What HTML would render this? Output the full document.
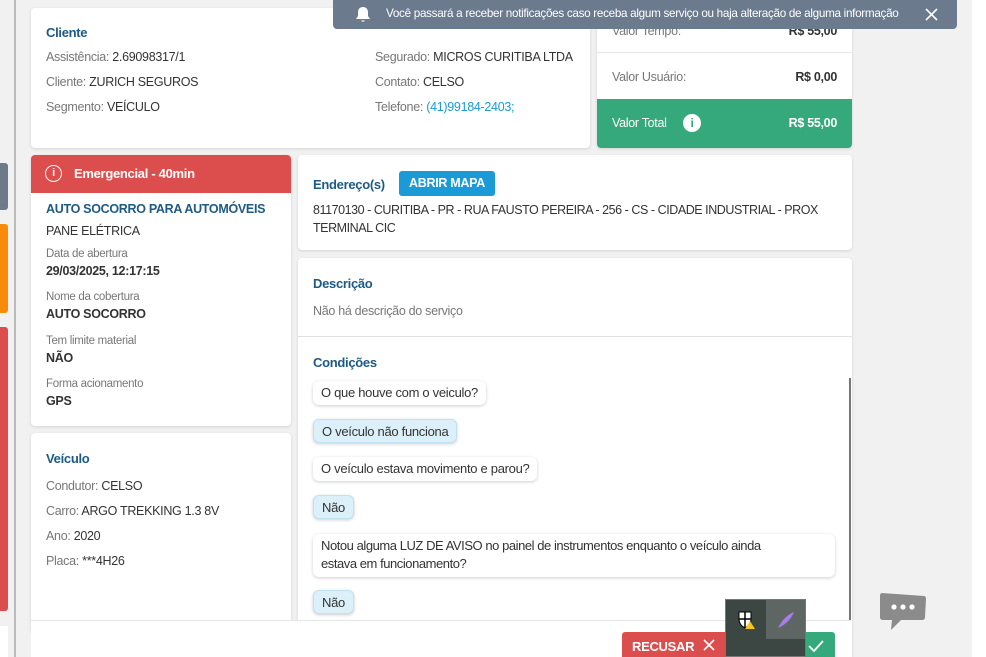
<!DOCTYPE html>
<html><head><meta charset="utf-8"><style>
*{box-sizing:border-box;margin:0;padding:0}
html,body{width:986px;height:657px;overflow:hidden}
body{background:#f1f1f1;font-family:"Liberation Sans",sans-serif;font-size:12.5px;color:#333;position:relative;letter-spacing:-0.3px}
.a{position:absolute}
.card{position:absolute;background:#fff;border-radius:4px;box-shadow:0 1px 3px rgba(0,0,0,.12)}
.h{color:#1d5a85;font-weight:bold;font-size:13px}
.g{color:#777}
.lbl{color:#777;font-size:11.5px}
.v{font-weight:bold;color:#333}
.bub{position:absolute;left:313px;background:#fff;border-radius:6px;box-shadow:0 1px 3px rgba(0,0,0,.2);padding:0 8px;height:24px;line-height:24px;font-size:13px}
.ans{background:#dcf0fa;border:1px solid #bfe2f3}
</style></head><body>
<div class="a" style="left:14px;top:0;width:2px;height:657px;background:#bbb"></div>
<div class="a" style="left:0;top:163px;width:8px;height:47px;background:#6d7a8a;border-radius:0 3px 3px 0"></div>
<div class="a" style="left:0;top:224px;width:8px;height:89px;background:#f88c0a;border-radius:0 3px 3px 0"></div>
<div class="a" style="left:0;top:327px;width:8px;height:284px;background:#dc4e4e;border-radius:0 3px 3px 0"></div>
<div class="a" style="left:0;top:626px;width:8px;height:31px;background:#fff"></div>
<div class="a" style="left:972px;top:0;width:14px;height:657px;background:#fff"></div>

<div class="card" style="left:31px;top:8px;width:559px;height:140px">
<div class="a h" style="left:15px;top:17px">Cliente</div>
<div class="a" style="left:15px;top:42px"><span class="g">Assistência:</span> 2.69098317/1</div>
<div class="a" style="left:15px;top:67px"><span class="g">Cliente:</span> ZURICH SEGUROS</div>
<div class="a" style="left:15px;top:92px"><span class="g">Segmento:</span> VEÍCULO</div>
<div class="a" style="left:344px;top:42px"><span class="g">Segurado:</span> MICROS CURITIBA LTDA</div>
<div class="a" style="left:344px;top:67px"><span class="g">Contato:</span> CELSO</div>
<div class="a" style="left:344px;top:92px"><span class="g">Telefone:</span> <span style="color:#1a9ad6">(41)99184-2403;</span></div>
</div>

<div class="card" style="left:597px;top:0;width:255px;height:148px;border-radius:0 0 4px 4px;overflow:hidden">
<div class="a g" style="left:15px;top:24px">Valor Tempo:</div><div class="a v" style="right:15px;top:24px">R$ 55,00</div>
<div class="a" style="left:0;top:52px;width:255px;height:1px;background:#e6e6e6"></div>
<div class="a g" style="left:15px;top:70px">Valor Usuário:</div><div class="a v" style="right:15px;top:70px">R$ 0,00</div>
<div class="a" style="left:0;top:99px;width:255px;height:49px;background:#35a97c;color:#fff">
<span class="a" style="left:15px;top:17px">Valor Total</span>
<span class="a" style="left:86px;top:15px;width:18px;height:18px;border-radius:50%;background:#fff;color:#35a97c;font-weight:bold;font-size:12px;text-align:center;line-height:18px">i</span>
<span class="a" style="right:15px;top:17px;font-weight:bold">R$ 55,00</span></div>
</div>

<div class="a" style="left:333px;top:0;width:624px;height:29px;background:#6c7a8d;border-radius:0 0 4px 4px;color:#fff;font-size:11.7px">
<svg class="a" style="left:22px;top:6px" width="16" height="17" viewBox="0 0 16 17"><path d="M8 1 C4.5 1 3 3.5 3 6.5 L3 10 L1 13 L15 13 L13 10 L13 6.5 C13 3.5 11.5 1 8 1Z" fill="#fff"/><path d="M6 14.5 Q8 17 10 14.5Z" fill="#fff"/></svg>
<span class="a" style="left:53px;top:7px">Você passará a receber notificações caso receba algum serviço ou haja alteração de alguma informação</span>
<svg class="a" style="left:592px;top:8px" width="13" height="13"><path d="M1 1 L12 12 M12 1 L1 12" stroke="#fff" stroke-width="1.6"/></svg></div>

<div class="card" style="left:31px;top:155px;width:260px;height:271px;overflow:hidden">
<div class="a" style="left:0;top:0;width:260px;height:38px;background:#dc4e4e;color:#fff;font-weight:bold;font-size:13px">
<span class="a" style="left:14px;top:10px;width:17px;height:17px;border:1.5px solid #fff;border-radius:50%;text-align:center;line-height:14px;font-size:11px">i</span>
<span class="a" style="left:43px;top:11px">Emergencial - 40min</span></div>
<div class="a h" style="left:15px;top:47px;font-size:12.5px">AUTO SOCORRO PARA AUTOMÓVEIS</div>
<div class="a" style="left:15px;top:69px">PANE ELÉTRICA</div>
<div class="a lbl" style="left:15px;top:93px">Data de abertura</div>
<div class="a v" style="left:15px;top:109px">29/03/2025, 12:17:15</div>
<div class="a lbl" style="left:15px;top:136px">Nome da cobertura</div>
<div class="a v" style="left:15px;top:152px">AUTO SOCORRO</div>
<div class="a lbl" style="left:15px;top:180px">Tem limite material</div>
<div class="a v" style="left:15px;top:196px">NÃO</div>
<div class="a lbl" style="left:15px;top:223px">Forma acionamento</div>
<div class="a v" style="left:15px;top:239px">GPS</div>
</div>

<div class="card" style="left:31px;top:433px;width:260px;height:200px">
<div class="a h" style="left:15px;top:18px">Veículo</div>
<div class="a" style="left:15px;top:46px"><span class="g">Condutor:</span> CELSO</div>
<div class="a" style="left:15px;top:71px"><span class="g">Carro:</span> ARGO TREKKING 1.3 8V</div>
<div class="a" style="left:15px;top:96px"><span class="g">Ano:</span> 2020</div>
<div class="a" style="left:15px;top:121px"><span class="g">Placa:</span> ***4H26</div>
</div>

<div class="card" style="left:298px;top:155px;width:554px;height:95px">
<div class="a h" style="left:15px;top:22px">Endereço(s)</div>
<div class="a" style="left:101px;top:16px;width:96px;height:25px;background:#1a9ad6;border-radius:3px;color:#fff;font-weight:bold;font-size:12.5px;text-align:center;line-height:25px">ABRIR MAPA</div>
<div class="a" style="left:15px;top:46px;width:530px;line-height:18px;letter-spacing:-0.45px">81170130 - CURITIBA - PR - RUA FAUSTO PEREIRA - 256 - CS - CIDADE INDUSTRIAL - PROX TERMINAL CIC</div>
</div>

<div class="card" style="left:298px;top:258px;width:554px;height:399px;border-radius:4px 4px 0 0">
<div class="a h" style="left:15px;top:18px">Descrição</div>
<div class="a g" style="left:15px;top:46px">Não há descrição do serviço</div>
<div class="a" style="left:0;top:78px;width:554px;height:1px;background:#e0e0e0"></div>
<div class="a h" style="left:15px;top:97px">Condições</div>
</div>
<div class="a" style="left:849px;top:378px;width:2px;height:242px;background:#777"></div>
<div class="bub" style="top:381px">O que houve com o veiculo?</div>
<div class="bub ans" style="top:419px">O veículo não funciona</div>
<div class="bub" style="top:457px">O veículo estava movimento e parou?</div>
<div class="bub ans" style="top:495px">Não</div>
<div class="bub" style="top:534px;width:522px;height:43px;line-height:18px;padding-top:3px;padding-right:40px;letter-spacing:-0.45px">Notou alguma LUZ DE AVISO no painel de instrumentos enquanto o veículo ainda estava em funcionamento?</div>
<div class="bub ans" style="top:590px">Não</div>

<div class="a" style="left:31px;top:620px;width:820px;height:37px;background:#fff;border-top:1px solid #e6e6e6"></div>
<div class="a" style="left:622px;top:632px;width:106px;height:25px;background:#dc4e4e;border-radius:3px 0 0 0;color:#fff;font-weight:bold;font-size:13px;line-height:30px;padding-left:10px">RECUSAR <svg width="12" height="12" style="margin-left:5px"><path d="M1 1 L11 11 M11 1 L1 11" stroke="#fff" stroke-width="1.6"/></svg></div>
<div class="a" style="left:800px;top:632px;width:35px;height:25px;background:#35a97c;border-radius:0 3px 0 0"><svg class="a" style="left:8px;top:8px" width="16" height="12"><path d="M1 6 L6 11 L15 1" stroke="#fff" stroke-width="1.8" fill="none"/></svg></div>
<div class="a" style="left:725px;top:599px;width:81px;height:58px;background:#3c4743;border:1px solid #777">
<div class="a" style="left:40px;top:0;width:39px;height:39px;background:#5e6663"></div>
<svg class="a" style="left:11px;top:10px" width="20" height="20"><path d="M2 2 L14 2 L14 9 Q14 15 8 18 Q2 15 2 9Z" fill="#fff" stroke="#000"/><path d="M8 2 V18 M2 9 H14" stroke="#000" stroke-width="1.5"/><path d="M13 11 L18 19 L8 19Z" fill="#f5c518"/></svg>
<svg class="a" style="left:50px;top:10px" width="20" height="20"><path d="M2 18 Q8 6 18 2 Q14 12 4 17Z" fill="#a77ee6"/></svg>
</div>
<svg class="a" style="left:879px;top:590px" width="48" height="42"><path d="M3 3 L45 6 Q47 6 47 9 L46 27 Q46 30 43 30 L22 30 L12 40 L13 30 L4 30 Q1 30 1 27 L1 6 Q1 3 3 3Z" fill="#8b8b8b"/><circle cx="15" cy="17" r="2.6" fill="#fff"/><circle cx="24" cy="17" r="2.6" fill="#fff"/><circle cx="33" cy="17" r="2.6" fill="#fff"/></svg>
</body></html>
